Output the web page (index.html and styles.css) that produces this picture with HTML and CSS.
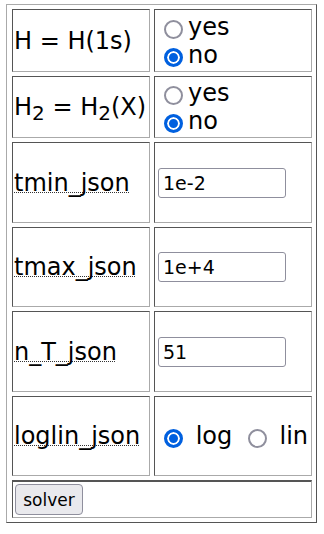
FILE: index.html
```html
<!DOCTYPE html>
<html lang="en">
	<head>
		<meta charset="UTF-8">
		<meta name="viewport" content="width=device-width, initial-scale=1.0">
		<title>solver</title>
		<link rel="stylesheet" href="styles.css">
	</head>
    <body>
        <form name="form1" action="index.html">
            <table class="params">
                <tr class="r1">
                    <td class="lbl">H = H(1s)</td>
                    <td class="val">
                        <label><input type="radio" name="h1s" value="yes">yes</label><br>
                        <label><input type="radio" name="h1s" value="no" checked>no</label>
                    </td>
                </tr>
                <tr class="r2">
                    <td class="lbl">H<sub>2</sub> = H<sub>2</sub>(X)</td>
                    <td class="val">
                        <label><input type="radio" name="h2x" value="yes">yes</label><br>
                        <label><input type="radio" name="h2x" value="no" checked>no</label>
                    </td>
                </tr>
                <tr class="r3">
                    <td class="lbl"><abbr title="minimum temperature">tmin_json</abbr></td>
                    <td class="val"><input type="text" class="num" name="tmin_json" value="1e-2"></td>
                </tr>
                <tr class="r4">
                    <td class="lbl"><abbr title="maximum temperature">tmax_json</abbr></td>
                    <td class="val"><input type="text" class="num" name="tmax_json" value="1e+4"></td>
                </tr>
                <tr class="r5">
                    <td class="lbl"><abbr title="number of temperatures">n_T_json</abbr></td>
                    <td class="val"><input type="text" class="num" name="n_T_json" value="51"></td>
                </tr>
                <tr class="r6">
                    <td class="lbl"><abbr title="log or linear scale">loglin_json</abbr></td>
                    <td class="val nowrap">
                        <label><input type="radio" name="loglin" value="log" checked> log</label>
                        <label><input type="radio" name="loglin" value="lin" class="second"> lin</label>
                    </td>
                </tr>
                <tr class="r7">
                    <td colspan="2" class="submit"><button type="button" id="solver">solver</button></td>
                </tr>
            </table>
        </form>
    </body>
</html>
```

FILE: styles.css
```css
body{padding:0; margin:0; font-family:"DejaVu Sans", Verdana, sans-serif; font-size:24px; color:#000;}
form{margin:0;}

.params{
    margin:4px 0 0 6px; padding:0 0 0 1px;
    border-collapse:separate; border-spacing:4px;
    border:1px solid; border-color:#aaa #555 #555 #aaa;
}
.params td{
    box-sizing:border-box; padding:1px;
    border:1px solid; border-color:#555 #aaa #aaa #555;
    line-height:28px; vertical-align:middle;
}
.params .lbl{width:138px; white-space:nowrap;}
.params .val{width:158px;}
.nowrap{white-space:nowrap;}

.r1 td{height:63px;}
.r2 td{height:62px;}
.r3 td, .r5 td{height:81px;}
.r4 td, .r6 td{height:80px;}
.r7 td{height:38px;}

sub{font-size:20px; line-height:0; vertical-align:-5px;}
abbr{
    text-decoration:underline dotted #333; text-decoration-thickness:1px;
    text-underline-offset:1px; text-decoration-skip-ink:none;
}

input[type=radio]{
    appearance:none; -webkit-appearance:none;
    width:19px; height:19px; margin:0 5px 0 8px; box-sizing:border-box;
    border:2px solid #8f8f9d; border-radius:50%; background:#fff;
    vertical-align:-4px;
}
input[type=radio]:checked{
    border:3px solid #0060df; background:#0060df;
    box-shadow:inset 0 0 0 2px #fff;
}

.num{
    box-sizing:border-box; width:128px; height:30px; margin:0 0 0 2px;
    padding:0 4px; border:1px solid #8f8f9d; border-radius:3px;
    font-family:"DejaVu Sans", Verdana, sans-serif; font-size:19px; color:#000;
    vertical-align:middle;
}

.params .submit{border-top:2px solid #555; padding:1px;}
#solver{
    box-sizing:border-box; width:68px; height:31px; margin:0 0 0 1px; padding:0;
    background:#e9e9ed; border:1px solid #8f8f9d; border-radius:4px;
    font-family:"DejaVu Sans", Verdana, sans-serif; font-size:17px; color:#000;
    vertical-align:middle; line-height:normal;
}
```
